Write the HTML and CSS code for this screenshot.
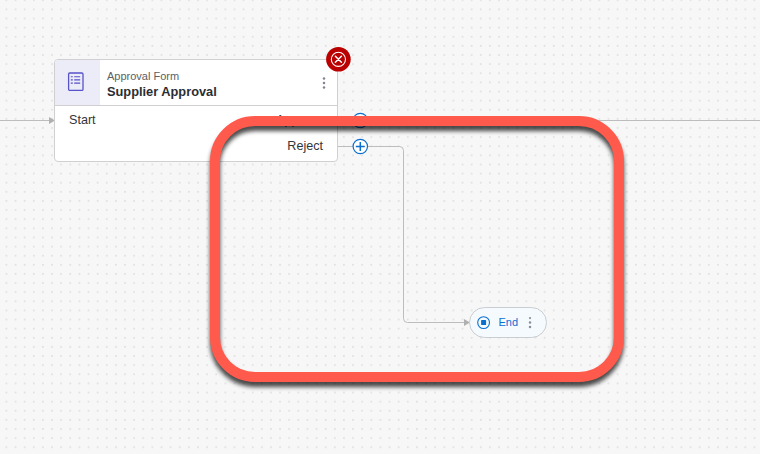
FILE: index.html
```html
<!DOCTYPE html>
<html lang="en">
<head>
<meta charset="utf-8">
<title>Supplier Approval</title>
<link rel="stylesheet" href="styles.css">
</head>
<body>
<main class="canvas">
  <svg class="layer" width="760" height="454" aria-hidden="true">
    <defs>
      <pattern id="dots" x="1.900" y="4.900" width="9.122" height="9.122" patternUnits="userSpaceOnUse">
        <circle cx="4.500" cy="4.500" r="1" fill="#e1e1e1"/>
      </pattern>
    </defs>
    <rect width="760" height="454" fill="url(#dots)"/>
    <g fill="none" stroke="#bdbdbd">
      <path d="M0 120.500H50M338 120.500H760"/>
      <path d="M338 146.500H399.500Q403.500 146.500 403.500 150.500V318.500Q403.500 322.500 407.500 322.500H465"/>
    </g>
    <path d="M49 117l6 3.500-6 3.500zM464 319l6 3.500-6 3.500z" fill="#b0b0b0"/>
  </svg>

  <section class="node">
    <header class="node-header">
      <div class="node-icon">
        <svg width="18" height="20" viewBox="0 0 18 20" fill="none" stroke="#5652c8">
          <rect x="1.600" y="1" width="14.400" height="17.400" rx="1.200" stroke-width="1.300"/>
          <path d="M3.800 4.700h2M7.200 4.700h6M3.800 7.900h2M7.200 7.900h6M3.800 11.100h2M7.200 11.100h6" stroke-width="1.100"/>
        </svg>
      </div>
      <div class="node-title">
        <span class="kind">Approval Form</span>
        <strong class="name">Supplier Approval</strong>
      </div>
      <svg class="kebab" width="4" height="12" viewBox="0 0 4 12" fill="#80848f"><circle cx="2" cy="1.500" r="1.250"/><circle cx="2" cy="6" r="1.250"/><circle cx="2" cy="10.500" r="1.250"/></svg>
    </header>
    <div class="ports">
      <span>Start</span>
      <div class="outputs"><span>Approve</span><span>Reject</span></div>
    </div>
  </section>

  <svg class="badge" width="26" height="26" viewBox="0 0 26 26" fill="none" stroke="#fff">
    <circle cx="13.400" cy="13.300" r="12.300" fill="#bb0000" stroke="none"/>
    <circle cx="13.400" cy="13.300" r="7.100" stroke-width="1.100"/>
    <path d="M10.400 10.300l6 6M16.400 10.300l-6 6" stroke-width="1.500" stroke-linecap="round"/>
  </svg>

  <svg class="plus plus-approve" width="18" height="18" viewBox="0 0 18 18"><circle cx="9.300" cy="9.500" r="7.200"/><path d="M9.300 5v9M4.800 9.500h9"/></svg>
  <svg class="plus plus-reject" width="18" height="18" viewBox="0 0 18 18"><circle cx="9.300" cy="9.500" r="7.200"/><path d="M9.300 5v9M4.800 9.500h9"/></svg>

  <div class="end">
    <svg width="14" height="14" viewBox="0 0 14 14"><circle cx="6.600" cy="6.600" r="5.900" fill="none" stroke="#0a6ed1" stroke-width="1.100"/><rect x="4.100" y="4.100" width="5" height="5" rx=".6" fill="#0a6ed1"/></svg>
    <span>End</span>
    <svg width="4" height="12" viewBox="0 0 4 12" fill="#8b8f98"><circle cx="2" cy="1.100" r="1.100"/><circle cx="2" cy="5.600" r="1.250"/><circle cx="2" cy="10.100" r="1.250"/></svg>
  </div>

  <div class="highlight"></div>
</main>
</body>
</html>
```
FILE: styles.css
```css
* { box-sizing: border-box; }
body { margin: 0; font-family: "Liberation Sans", Arial, sans-serif; color: #32363a; }
svg { display: block; }
.canvas { position: relative; width: 760px; height: 454px; overflow: hidden; background: #f7f7f7; }
.layer { position: absolute; inset: 0; }
.node {
  position: absolute; left: 54px; top: 59px; width: 284px; height: 103px;
  background: #fff; border: 1px solid #d0d0d0; border-radius: 4px; overflow: hidden;
}
.node-header { display: flex; height: 46px; border-bottom: 1px solid #d0d0d0; }
.node-icon { width: 44.5px; background: #ecebf8; padding: 12px 0 0 11.5px; }
.node-title { flex: 1; display: flex; flex-direction: column; padding: 9px 0 0 7.5px; }
.kind { font-size: 11px; line-height: 15px; color: #5c5f63; }
.name { font-size: 12.8px; line-height: 16px; color: #2a2e33; }
.kebab { margin: 17px 11px 0 0; }
.ports { display: flex; justify-content: space-between; padding: 1px 14px 0; font-size: 12.6px; line-height: 26px; }
.outputs { display: flex; flex-direction: column; text-align: right; }
.badge { position: absolute; left: 325px; top: 46px; }
.plus { position: absolute; left: 351px; fill: #fff; stroke: #0a6ed1; stroke-width: 1.2; }
.plus path { stroke-width: 1.5; }
.plus-approve { top: 111px; }
.plus-reject { top: 137px; }
.end {
  position: absolute; left: 469px; top: 307px; width: 78px; height: 31px;
  display: flex; align-items: center; padding-left: 7px;
  background: #f5faff; border: 1px solid #cacdd0; border-radius: 16px;
  color: #0a6ed1; font-size: 11px;
}
.end span { width: 21px; margin: 0 8px 1px 7.5px; }
.highlight {
  position: absolute; left: 210px; top: 116px; width: 414px; height: 266px;
  border: 10px solid #ff5a4c; border-radius: 45px;
  filter: drop-shadow(0 5px 2px rgba(0, 0, 0, .7));
}
```
